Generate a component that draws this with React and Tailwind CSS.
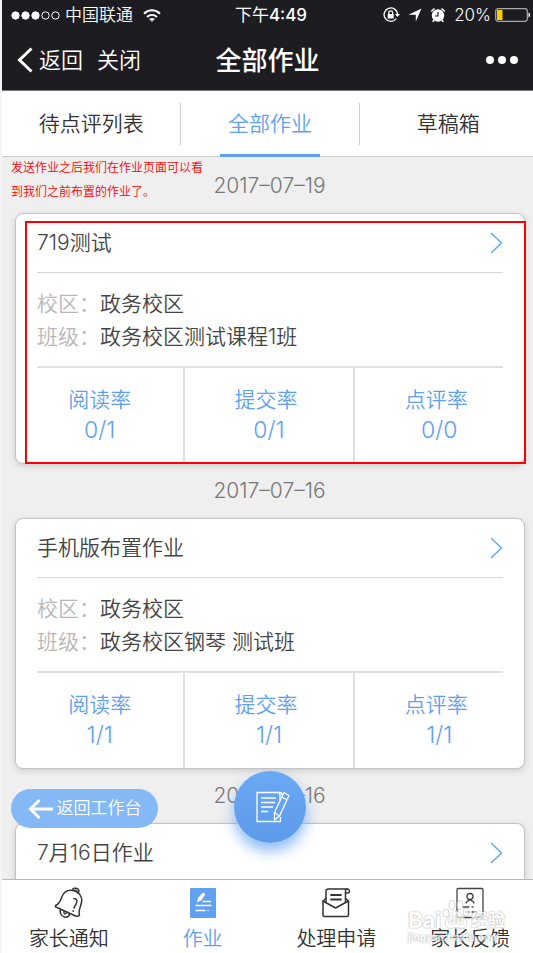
import { useState } from 'react';

const TABS = ['待点评列表', '全部作业', '草稿箱'];

const HOMEWORK = [
  {
    id: 1,
    date: '2017–07–19',
    title: '719测试',
    campus: '政务校区',
    group: '政务校区测试课程1班',
    read: '0/1',
    submit: '0/1',
    review: '0/0',
    marked: true,
  },
  {
    id: 2,
    date: '2017–07–16',
    title: '手机版布置作业',
    campus: '政务校区',
    group: '政务校区钢琴 测试班',
    read: '1/1',
    submit: '1/1',
    review: '1/1',
  },
  {
    id: 3,
    date: '2017–07–16',
    title: '7月16日作业',
  },
];

const NAV = [
  { label: '家长通知', Icon: BellIcon },
  { label: '作业', Icon: HomeworkIcon },
  { label: '处理申请', Icon: EnvelopeIcon },
  { label: '家长反馈', Icon: FeedbackIcon },
];

function BellIcon() {
  return (
    <svg width="30" height="32" viewBox="0 0 30 32" fill="none" stroke="#333" strokeWidth="1.5" strokeLinecap="round" strokeLinejoin="round">
      <path d="M1.500 18.500C5 17.500 6.500 14 8 9.500C10 4.500 14.500 2.500 19.500 3.500C26 5.500 28.500 10.500 27.500 15.500C26.500 20 24 24.500 25.500 28C25 29.800 23.500 29.500 21.500 29L3 20.500C1.500 20 1 19.500 1.500 18.500Z" />
      <path d="M18.500 3.500C18.500 1 21 .8 23 1.500C25.200 2.300 25.500 4.500 24 6.200" />
      <path d="M21 3.200L23 4.200" />
      <path d="M6.500 22.500C5.500 25.500 7 29 10.500 30C13 30.500 15 29 15.500 27" />
      <path d="M10 24.500C9.500 26.500 11 27.500 12.500 26" />
      <path d="M20 11.500C22.500 11.500 23.500 13.500 22.500 16C22 18 20.500 19 20 21" />
      <path d="M19.200 23.800L19.100 24.200" />
    </svg>
  );
}

function HomeworkIcon() {
  return (
    <svg width="28" height="32" viewBox="0 0 28 32" fill="none">
      <rect x="1" y="1" width="26" height="30" rx="1" fill="#62a1f2" />
      <path d="M8 15.500L9 11L13.500 6C14.500 5.200 16.500 6.500 16 8L12 13.500Z" fill="#fff" />
      <path d="M13.500 14.500H22M6.500 18.500H22.500M6.500 23.500H16.500M18.500 23.500H19.500" stroke="#fff" strokeWidth="1.5" />
    </svg>
  );
}

function EnvelopeIcon() {
  return (
    <svg width="30" height="32" viewBox="0 0 30 32" fill="none" stroke="#333" strokeWidth="1.5" strokeLinecap="round" strokeLinejoin="round">
      <path d="M5 11.500L2 14V28C2 29 2.500 29.500 3.500 29.500H26C27 29.500 27.500 29 27.500 28V14L24.500 11.500" />
      <path d="M2 14L14.500 21L27.500 14" />
      <path d="M5 15.500V4.500C5 3 6 2 7.500 2H26C29 2 29 6 27 6H24.500V15.500" />
      <path d="M24.500 6V4C24.500 3 25 2 26 2" />
      <path d="M10 8H20M10 12.500H20" strokeWidth="1.800" />
    </svg>
  );
}

function FeedbackIcon() {
  return (
    <svg width="28" height="32" viewBox="0 0 28 32" fill="none" stroke="#444" strokeWidth="1.300" strokeLinecap="round">
      <rect x="1" y="1.500" width="26" height="29" rx="1" />
      <circle cx="14" cy="9.500" r="3" />
      <path d="M10 16C11 13.500 12.500 14 14 12.800C15.500 14 17 13.500 18 16" />
      <path d="M7 20H13M16 20H17M9 25H13M16 25H20" />
    </svg>
  );
}

function StatusBar() {
  return (
    <div className="grid h-[30px] grid-cols-[1fr_auto_1fr] items-center pl-[9px] pr-1 text-[17px] leading-none">
      <div className="flex items-center">
        <svg width="49" height="9" viewBox="0 0 49 9" fill="#fff" stroke="#fff">
          <circle cx="4.500" cy="4.500" r="3.700" />
          <circle cx="14.500" cy="4.500" r="3.700" />
          <circle cx="24.500" cy="4.500" r="3.700" />
          <circle cx="34.500" cy="4.500" r="3.700" fill="none" />
          <circle cx="44.500" cy="4.500" r="3.700" fill="none" />
        </svg>
        <span className="ml-[5px] font-[350]">中国联通</span>
        <svg className="ml-2.5" width="18" height="13" viewBox="0 0 18 13" fill="none" stroke="#fff" strokeWidth="2">
          <path d="M1 4.800C5.500 .2 12.500 .2 17 4.800" />
          <path d="M4 8C7 5.200 11 5.200 14 8" />
          <path d="M9 12.800L6.200 10C7.800 8.700 10.200 8.700 11.800 10Z" fill="#fff" stroke="none" />
        </svg>
      </div>
      <span>下午<span className="font-medium">4:49</span></span>
      <div className="flex items-center justify-end">
        <svg width="17" height="16" viewBox="0 0 17 16" fill="none" stroke="#fff" strokeWidth="1.300">
          <path d="M13.300 11.500A6.700 6.700 0 1 1 14.500 7.500" />
          <path d="M12 7H17L14.500 10Z" fill="#fff" stroke="none" />
          <rect x="4.700" y="7" width="6" height="4.500" fill="#fff" stroke="none" />
          <path d="M5.800 7.500V5.500C5.800 3.300 9.600 3.300 9.600 5.500V7.500" />
        </svg>
        <svg className="ml-2" width="14" height="14" viewBox="0 0 14 14" fill="#fff">
          <path d="M13.500 .5L7.800 13.500V6.800H.5Z" />
        </svg>
        <svg className="ml-2" width="16" height="16" viewBox="0 0 16 16" fill="none" stroke="#fff" strokeWidth="1.500">
          <circle cx="8" cy="8.500" r="6.200" fill="#fff" stroke="none" />
          <path d="M8 5V9H5" stroke="#1d1c21" strokeWidth="1.200" />
          <path d="M1.200 4.500L4.500 1.500M14.800 4.500L11.500 1.500M4 13L2.800 14.800M12 13L13.200 14.800" />
        </svg>
        <span className="ml-2 font-[350]">20%</span>
        <svg className="ml-1" width="36" height="14" viewBox="0 0 36 14" fill="none">
          <rect x=".7" y=".7" width="31.600" height="12.600" rx="2.500" stroke="#aaa" strokeWidth="1.200" />
          <rect x="2" y="2" width="5.500" height="10" fill="#fecb00" />
          <path d="M33.500 4.500C35.500 5 35.500 9 33.500 9.500Z" fill="#fff" />
        </svg>
      </div>
    </div>
  );
}

function TitleBar() {
  return (
    <div className="grid h-[60px] grid-cols-[1fr_auto_1fr] items-center pl-[15px] pr-[17px]">
      <div className="flex items-center gap-[14px] text-[22px] font-[350]">
        <button className="flex items-center gap-1.5">
          <svg width="16" height="26" viewBox="0 0 16 26" fill="none" stroke="#fff" strokeWidth="3">
            <path d="M14.500 1.500L2.500 13L14.500 24.500" />
          </svg>
          返回
        </button>
        <button>关闭</button>
      </div>
      <h1 className="text-[26px] font-medium">全部作业</h1>
      <button aria-label="更多" className="flex gap-1 justify-self-end">
        <span className="size-2 rounded-full bg-white" />
        <span className="size-2 rounded-full bg-white" />
        <span className="size-2 rounded-full bg-white" />
      </button>
    </div>
  );
}

function Stat({ label, value }) {
  return (
    <div className="pt-4 pb-[17px] text-center leading-[31px] text-[#5e9ff3]">
      <dt className="text-[21px]">{label}</dt>
      <dd className="text-[23px]">{value}</dd>
    </div>
  );
}

function HomeworkCard({ item }) {
  return (
    <section>
      <h2 className="flex h-[54px] items-center justify-center text-[21px] text-[#777]">{item.date}</h2>
      <article className="relative ml-[13px] mr-3 min-h-[250px] rounded-lg border border-[#c4c4c4] bg-white shadow-[0_2px_6px_rgba(0,0,0,0.15)]">
        <a href="#detail" className="mx-[21px] flex h-[59px] items-center justify-between border-b border-[#d5d5d5] text-[21px] text-[#444]">
          {item.title}
          <svg width="13" height="22" viewBox="0 0 13 22" fill="none" stroke="#62a9f8" strokeWidth="1.500">
            <path d="M1 1L11.500 11L1 21" />
          </svg>
        </a>
        {item.campus && (
          <>
            <div className="mx-[21px] border-b-2 border-[#e0e0e0] pt-3.5 pb-[13px] text-[21px] leading-[33px] text-[#444]">
              <p><span className="text-[#b8b8b8]">校区：</span>{item.campus}</p>
              <p><span className="text-[#b8b8b8]">班级：</span>{item.group}</p>
            </div>
            <dl className="grid grid-cols-3 divide-x-2 divide-[#e0e0e0]">
              <Stat label="阅读率" value={item.read} />
              <Stat label="提交率&nbsp;" value={item.submit} />
              <Stat label="点评率&nbsp;" value={item.review} />
            </dl>
          </>
        )}
        {item.marked && <div className="pointer-events-none absolute top-[7px] -right-0.5 -bottom-px left-[9px] border-2 border-[#f00]" />}
      </article>
    </section>
  );
}

function Watermark() {
  return (
    <div className="pointer-events-none absolute right-8 bottom-2.5 w-[97px] font-bold text-white opacity-75 [text-shadow:0_0_1px_#999,0_0_2px_#aaa]">
      <div className="flex items-end justify-between">
        <span className="text-[22px] leading-[22px]">Bai</span>
        <span className="relative text-[12px] leading-[18px]">
          <svg width="28" height="32" viewBox="0 0 28 32" fill="#fff" stroke="#bbb" strokeWidth=".8">
            <ellipse cx="4" cy="14" rx="3" ry="4" />
            <ellipse cx="10" cy="6" rx="3" ry="4.500" />
            <ellipse cx="18" cy="6" rx="3" ry="4.500" />
            <ellipse cx="24" cy="13" rx="3" ry="4" />
            <path d="M14 12C18 12 19 16 23 19.500C27 24 24 30 19 29.500C15 28.500 13 28.500 9 29.500C4 30 1 24 5 19.500C9 16 10 12 14 12Z" />
          </svg>
          <span className="absolute inset-x-0 bottom-0.5 text-center">du</span>
        </span>
        <span className="text-[17px] leading-[22px]">经验</span>
      </div>
      <div className="text-[10px] leading-[12px]">jingyan.baidu.com</div>
    </div>
  );
}

export default function App() {
  const [tab, setTab] = useState(1);
  const [page, setPage] = useState(1);

  return (
    <div className="h-screen overflow-hidden bg-[#f5f5f5] font-[Inter,'Noto_Sans_CJK_SC',sans-serif]">
      <div className="relative -mr-1 ml-0.5 flex h-full flex-col bg-[#efefef] font-[350]">
        <header className="border-b border-[#777] bg-[#1d1c21] pr-0.5 font-normal text-white">
          <StatusBar />
          <TitleBar />
        </header>

        <nav className="grid h-[66px] grid-cols-3 items-center border-b border-[#ccc] bg-white text-[21px]">
          {TABS.map((name, i) => (
            <button
              key={name}
              onClick={() => setTab(i)}
              className={`relative h-[42px] ${i > 0 ? 'border-l border-[#d0d0d0]' : ''} ${tab === i ? 'text-[#5e9ff3]' : 'text-[#333]'}`}
            >
              {name}
              {tab === i && <span className="absolute -bottom-3 left-1/2 h-[3px] w-[100px] -translate-x-1/2 bg-[#5e9ff3]" />}
            </button>
          ))}
        </nav>

        <main className="relative min-h-0 flex-1 overflow-hidden pt-0.5">
          {HOMEWORK.map(item => <HomeworkCard key={item.id} item={item} />)}

          <p className="absolute -top-px left-[9px] w-[196px] text-[12px] leading-6 text-[#f00]">
            发送作业之后我们在作业页面可以看到我们之前布置的作业了。
          </p>

          <a href="#workbench" className="absolute bottom-[51px] left-[9px] flex h-[39px] w-[147px] items-center justify-center gap-1 rounded-full bg-[#84b9f6] text-[17px] text-white">
            <svg width="25" height="20" viewBox="0 0 25 20" fill="none" stroke="#fff" strokeWidth="3">
              <path d="M11.500 1L2.500 10L11.500 19M2.500 10H25" />
            </svg>
            返回工作台
          </a>

          <button aria-label="布置作业" className="absolute bottom-9 left-1/2 flex size-[72px] -translate-x-1/2 items-center justify-center rounded-full bg-linear-to-b from-[#6ba9f4] to-[#5c9aeb] shadow-[0_8px_14px_rgba(78,150,245,0.65)]">
            <svg className="ml-1.5" width="34" height="32" viewBox="0 0 34 32" fill="none" stroke="#fff" strokeWidth="1.300" strokeLinejoin="round">
              <path d="M24 9V4C24 2 23 1.500 21 1.500H1V30.500H24.500V26" />
              <path d="M21 1.500H24C25.500 1.500 26 2.500 26 4" />
              <path d="M5 7H20M5 11.500H19M5 16H17M5 20.500H12" />
              <path d="M28 1.500L33 4.500L23.500 25L18.500 29L18.500 21.500Z" />
              <path d="M25.800 6L31 9M18.500 21.500L23.500 25" />
            </svg>
          </button>
        </main>

        <footer className="relative border-t border-[#b8b8b8] bg-white">
          <nav className="grid h-[73px] grid-cols-4">
            {NAV.map(({ label, Icon }, i) => (
              <button
                key={label}
                onClick={() => setPage(i)}
                className={`flex flex-col items-center gap-1.5 pt-[7px] text-[20px] leading-7 ${page === i ? 'text-[#5e9ff3]' : 'text-[#333]'}`}
              >
                <Icon />
                {label}
              </button>
            ))}
          </nav>
          <Watermark />
        </footer>
      </div>
    </div>
  );
}
